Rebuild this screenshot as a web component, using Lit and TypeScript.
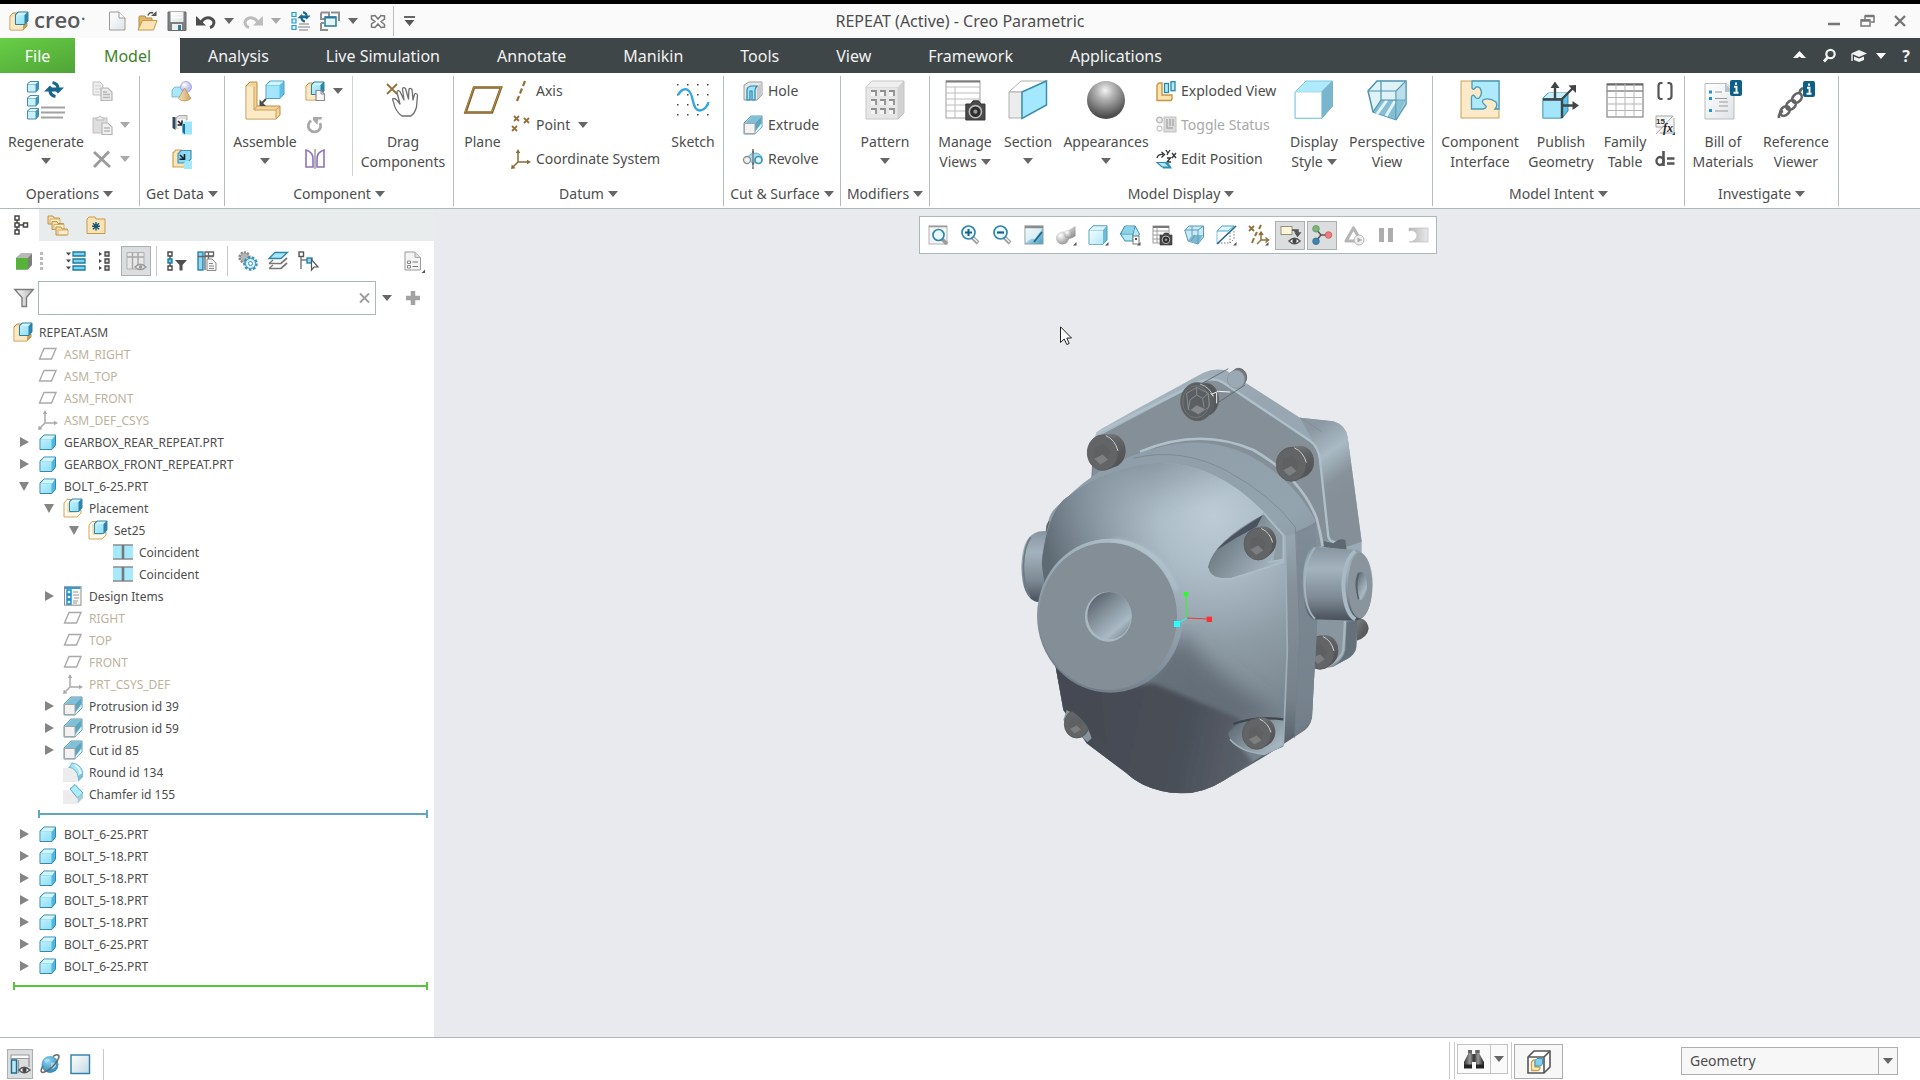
import { LitElement, html, svg, css, nothing } from "lit";
import { customElement } from "lit/decorators.js";
import { classMap } from "lit/directives/class-map.js";

/* ---------- icon fragments ---------- */

const partCube = svg`<path d="M2 7 L6 3 H17.500 V13 L14 17.500 H2 Z" fill="#4fb6de" stroke="#3787ab" stroke-linejoin="round"/>
  <path d="M2.500 7.500 L6 3.500 H17 L14 7.500 Z" fill="#d3f5fd"/>
  <path d="M2.500 7.500 H13.500 V17 H2.500 Z" fill="url(#gCyan)"/>`;

const asmCube = svg`<path d="M1 5 L4 2 H8 V12 H18 V15 L14 19 H1 Z" fill="#f8dfae" stroke="#c08f41" stroke-linejoin="round"/>
  <path d="M1.500 5.500 H5 V14 H14 V18.500 H1.500 Z" fill="#fce9c4"/>
  <path d="M14 14.500 L18 12.500 V15 L14 19 Z" fill="#d09d4b"/>
  <path d="M6.500 3.500 L9 1 H19 V10 L16 13.500 H6.500 Z" fill="#2d83aa" stroke="#33809f"/>
  <path d="M7 4 L9.500 1.500 H18 L15.500 4 Z" fill="#d3f3fd"/><path d="M7 4 H15.500 V13 H7 Z" fill="url(#gCyan)"/>`;

const asmOutline = svg`<path d="M1 5 L4 1.500 H8 V12 H18 V15 L14 19 H1 Z" fill="#fffaf0" stroke="#d3a452"/>
  <path d="M5 5 V14 H14" fill="none" stroke="#e6c686"/>
  <path d="M6.500 3.500 L9 1 H19 V10 L16 13.500 H6.500 Z" fill="#2d83aa" stroke="#3b87a6"/>
  <path d="M7 4 L9.500 1.500 H18 L15.500 4 Z" fill="#d3f3fd"/><path d="M7 4 H15.500 V13 H7 Z" fill="url(#gCyan)"/>`;

const camera = svg`<path d="M8 10 H11 L12.500 8 H16 L17.500 10 H20 V20 H8 Z" fill="#4a4a4a" stroke="#333" stroke-width=".6"/>
  <circle cx="14" cy="14.800" r="3.800" fill="#2c2c2c" stroke="#bbb" stroke-width="1"/><circle cx="14" cy="14.800" r="1.300" fill="#999"/>`;

const planeOutline = (c: string) => svg`<path d="M6 4.500 H18 L13.500 15 H1.500 Z" fill="none" stroke=${c} stroke-width="1.400"/>`;
const csys = (c: string) => svg`<path d="M7 3 V13 H18 M7 13 L1.500 18.500" fill="none" stroke=${c} stroke-width="1.500"/>
  <path d="M7 0 L9.200 4 H4.800 Z M20 13 L16 10.800 V15.200 Z M0 20 L.8 15.500 L4.500 19.200 Z" fill=${c}/>`;
const feature = svg`<path d="M1 8 L8 1 H19 V12 L12 19 H1 Z" fill="#d5edf5" stroke="#4e8ba3" stroke-width=".9"/>
  <path d="M2 8 L8.500 1.500 H18.500 L12 8 Z" fill="#7fc0d8"/><path d="M12 8 L18.500 1.500 V8 L12 17 Z" fill="#5ba5c1"/>
  <path d="M12 17 L18.500 9 V12 L12.500 18.500 Z" fill="#d9f5fd"/>
  <path d="M1.500 8.500 H12 V18.500 H1.500 Z" fill="#f2f2f2" stroke="#a5a5a5"/>`;
const twoArrows = svg`<path d="M0 11 L6 5 L12 11 Z M8 7 H20 L14 13 Z" fill="#17668b"/><path d="M6 10.500 Q6.500 15 11.500 16 M14 7.500 Q13.500 3 8.500 2" fill="none" stroke="#17668b" stroke-width="3.200"/>`;
const lens = svg`<path d="M12 12 L18 18" stroke="#9b9b9b" stroke-width="4"/><path d="M13 12.500 L17.500 17" stroke="#eee" stroke-width="1.500"/>
  <circle cx="8.500" cy="7.500" r="6.500" fill="#e9f8fe" stroke="#2f86ad" stroke-width="1.700"/>`;
const info = svg`<rect x="27" y="0" width="12" height="16" rx="2" fill="#0e5f86"/><path d="M33 2.500 v2.200 M31 6.700 h2.500 v5.500 M30.500 12.800 h5" fill="none" stroke="#fff" stroke-width="1.900"/>`;
const corner = svg`<path d="M20.500 17 V20.500 H17 Z" fill="#555"/>`;
const miniCube = (x: number, y: number) => svg`<g transform="translate(${x} ${y})"><path d="M.5 3 L3 .5 H11.500 V8 L9 11 H.5 Z" fill="#3d94b8" stroke="#3f8fb0"/><path d="M1 3 L3.500 1 H11 L8.500 3 Z" fill="#eefbff"/><path d="M1 3.500 H8.500 V10.500 H1 Z" fill="#c9f0fc"/></g>`;
const xMark = (x: number, y: number, s: number) => svg`<path d="M${x} ${y} l${s} ${s} m0 ${-s} l${-s} ${s}" stroke="#93713a" stroke-width="1.800" fill="none"/>`;

const icons: Record<string, unknown> = {
  asm: asmCube,
  asmOutline,
  part: partCube,
  planeDim: planeOutline("#a9a9a9"),
  csysDim: csys("#a9a9a9"),
  feature,
  coincident: svg`<rect y="3" width="20" height="14" fill="#a6e8fc"/><path d="M0 3 H20 M0 17 H20" stroke="#8c8c8c" stroke-width="1.400"/><path d="M10 3 V17" stroke="#777" stroke-width="2.600"/>`,
  design: svg`<rect x="1.500" y=".7" width="16.500" height="18.500" fill="#f7f7f7" stroke="#8d8d8d"/><path d="M2 2 H17.500" stroke="#2d9bd6" stroke-width="2"/>
    <path d="M4 4 h4 v4 h-4z M4 9 h4 v4 h-4z M4 14 h4 v4 h-4z" fill="#e5f6fd" stroke="#1789c4" stroke-width="1.400"/><path d="M10 6 H15 M10 9 H16 M11 12 H16 M10 15 H15 M10 17 H14" stroke="#999" stroke-width="1"/>`,
  round: svg`<path d="M0 6 H8 Q14 8 14 14 V20 H0 Z" fill="#ececec"/><path d="M6 1 H10" stroke="#ddd"/><path d="M6 6 Q8 3 9 1 Q18 2 20 11 L15 15 Q14 7 6 5 Z" fill="#a9e4f8" stroke="#57a9c7" stroke-width=".8"/><path d="M12 3 Q17 6 17.500 12" fill="none" stroke="#e4f8fe" stroke-width="2"/><path d="M14.500 15 L20 11 V15 L15 20 Z" fill="#7fbcd2"/>`,
  chamfer: svg`<path d="M0 6 H6 L14 14 V20 H0 Z" fill="#ececec"/><path d="M7 5 L12 .5 L20 9 L14.500 14 Z" fill="#a9ecfd" stroke="#4b95b0" stroke-width=".9"/><path d="M14.500 14 L20 9 V14 L14.500 19.500 Z" fill="#a8ccd8"/>`,

  newDoc: svg`<path d="M2.500 1 H12 L18 7 V19 H2.500 Z" fill="url(#gPaper)" stroke="#9a9a9a"/><path d="M12 1 V7 H18" fill="#fff" stroke="#9a9a9a"/>`,
  open: svg`<path d="M2 18 V6 Q2 5 3 5 H8 L9 7 H15 V10 H7 Z" fill="#e2b866" stroke="#b98b3a"/><path d="M1 19 L5.500 9.500 H20 L16.500 19 Z" fill="#fbe3b3" stroke="#c39a4b"/><path d="M11 4.500 Q12.500 .5 16 2" fill="none" stroke="#555" stroke-width="1.600"/><path d="M14 5 H19.500 V0 Z" fill="#555"/>`,
  save: svg`<path d="M1 1 H19 V19.500 H1 Z" fill="#7d7f81" stroke="#6b6b6b"/><rect x="3.500" y="1" width="13" height="10" fill="url(#gPaper)"/><rect x="5" y="13" width="10" height="6" fill="#e8f0f4"/><rect x="11" y="14" width="3" height="5" fill="#3a7792"/><path d="M5 3.500 H15 M5 6.500 H15" stroke="#fff"/>`,
  undo: svg`<path d="M4 13 Q8 5.500 14 7 Q20 9.500 17 14.500 Q16 16 14 16.500" fill="none" stroke="#4c4c4c" stroke-width="3"/><path d="M0 5 V14.500 H10 Z" fill="#4c4c4c"/>`,
  redo: svg`<path d="M16 13 Q12 5.500 6 7 Q0 9.500 3 14.500 Q4 16 6 16.500" fill="none" stroke="#bcbcbc" stroke-width="3"/><path d="M20 5 V14.500 H10 Z" fill="#bcbcbc"/>`,
  regenSmall: svg`<path d="M1 1.500 h4 v4 h-4z M1 8 h4 v4 h-4z M1 14.500 h4 v4 h-4z" fill="#d7f3fd" stroke="#2c9bcc" stroke-width="1.200"/><path d="M8 13 H18 M7 16 H19 M8 19 H17" stroke="#a7a7a7" stroke-width="1.500"/><g transform="translate(6.500 0) scale(.65)">${twoArrows}</g>`,
  windows: svg`<path d="M1 1.500 H9 V8 M11 1.500 H19 V10 M1 1.500 V8 H5 M1 12 V19 H8 M1 12 H4" fill="none" stroke="#8f8f8f" stroke-width="2"/><rect x="5" y="6" width="11" height="9" fill="#e4f6fc" stroke="#27799d" stroke-width="1.500"/><path d="M5 6.500 H16" stroke="#27799d" stroke-width="2"/>`,
  closeWin: svg`<path d="M3.500 5 L7 4.500 L10 8 L13 4.500 L16.500 5 V8 L13 10.500 L16.500 13.500 V16 L13 16.500 L10 13 L7 16.500 L3.500 16 V13 L7 10.500 L3.500 8 Z" fill="#fff" stroke="#777" stroke-width="1.500"/>`,
  custom: svg`<path d="M5 6 H16" stroke="#555" stroke-width="1.800"/><path d="M5.500 9 H15.500 L10.500 15 Z" fill="#555"/>`,

  regenerate: svg`${miniCube(1, 1)}${miniCube(1, 15)}${miniCube(1, 28)}<path d="M15 27.500 H39 M15 32.500 H39 M15 37.500 H37" stroke="#a2a2a2" stroke-width="2"/><g transform="translate(18 .5)">${twoArrows}</g>`,
  copyDim: svg`<path d="M1 1 H8 L11 4 V14 H1 Z" fill="#efefef" stroke="#c0c0c0"/><path d="M3 5 H9 M3 8 H9 M3 11 H7" stroke="#cfcfcf"/><path d="M9 7 H16 L20 11 V19.500 H9 Z" fill="#e9e9e9" stroke="#b5b5b5" stroke-width="1.200"/><path d="M11 11 H15 M11 13.500 H18 M11 16.500 H18" stroke="#b9b9b9" stroke-width="1.300"/>`,
  pasteDim: svg`<rect x="1" y="3" width="14" height="15" fill="#dedede" stroke="#c0c0c0"/><path d="M4 5 V3 H6 Q8 -1 10 3 H12 V5 Z" fill="#eee" stroke="#bbb"/><path d="M10 8 H16 L20 12 V19.500 H10 Z" fill="#f0f0f0" stroke="#b5b5b5" stroke-width="1.200"/><path d="M12 13 H18 M12 16 H18" stroke="#b9b9b9" stroke-width="1.400"/>`,
  deleteDim: svg`<path d="M2 3 L18 18 M17 2.500 L2 18" stroke="#9b9b9b" stroke-width="2.800"/>`,
  shapes: svg`<path d="M0 9 L3 6 H12 V14 L9 16 H0 Z" fill="#a9e7fb" stroke="#6aaecb" stroke-width=".8"/><circle cx="14" cy="6" r="5.500" fill="url(#gViolet)" stroke="#9a9cd6" stroke-width=".8"/><path d="M12.500 7 L19 17.500 Q16 20 12.500 20 Q9 20 6.500 17.500 Z" fill="url(#gTan)" stroke="#b7955a" stroke-width=".8"/>`,
  copyGeom: svg`<path d="M4 3 L7 .5 H15 V5 H7 V13 H4 Z" fill="#ddd" stroke="#999" stroke-width=".8"/><path d="M.5 2 H3.500 V15 L.5 13 Z" fill="#2d4a5c"/><rect x="5" y="4" width="9" height="9" fill="#f2f2f2"/><path d="M6 6 L9.500 9.500 M10 5.500 V10 H5.500" stroke="#222" stroke-width="1.600" fill="none"/><path d="M10 9 L13 6.500 H20 V19.500 H10 Z" fill="#9be4fb"/><path d="M10.500 9 H13 V19.500 L10.500 17 Z" fill="#176e92"/>`,
  shrink: svg`<path d="M1 4 L4 1 H9 V13 H13 V18 H1 Z" fill="#fbe5ba" stroke="#cb9f4f" stroke-width="1.200"/><path d="M6 5 L9 1.500 H19 V10 L15 14 H6 Z" fill="#8cd9f3" stroke="#4492b2" stroke-width="1.200"/><path d="M8 6 L11.500 9.500 M12.500 5 V10.300 H7.500" stroke="#123" stroke-width="1.600" fill="none"/><path d="M12 14 L14 12 H20 V20 H12 Z" fill="#a3e9fc"/>`,
  assemble: svg`<path d="M1 6 L5 2 H12 V26 H35 V35 L31 39 H1 Z" fill="#f4d49a" stroke="#b98d47" stroke-linejoin="round"/><path d="M1.500 6.500 H9 V30 H31 V38.500 H1.500 Z" fill="#fce9c6"/><path d="M9 6.500 V30 H31 V38 M9 30 L12 26 M31 30 L35 26.500" fill="none" stroke="#cba059"/>
    <path d="M21 5 L25 1 H39 V14 L35 18.500 H21 Z" fill="#5ac0e6" stroke="#4d9fc0" stroke-linejoin="round"/><path d="M21.500 5 L25.500 1.500 H38.500 L34.500 5 Z" fill="#d3f4fd"/><rect x="21.500" y="5.500" width="13" height="12.500" fill="#a3e6fb"/><path d="M21 19 L16 24" fill="none" stroke="#4c4c4c" stroke-width="2"/><path d="M14.500 19.500 V26 H21 Z" fill="#4c4c4c"/>`,
  createComp: svg`${asmCube}<path d="M11 9.500 H16 L19.500 13 V19.500 H11 Z" fill="#f6f6f6" stroke="#8b8b8b" stroke-width="1.200"/><path d="M16 9.500 V13 H19.500" fill="none" stroke="#8b8b8b"/>`,
  repeatDim: svg`<path d="M6 5.500 Q1.500 10 4.500 14.500 Q8 18.500 13 16 Q17 12.500 15 8" fill="none" stroke="#a9a9a9" stroke-width="2.700"/><path d="M8 2 H17 L16.500 4.500 H13 L12.500 10 L8 5 Z" fill="#a9a9a9"/>`,
  mirror: svg`<path d="M1 1 Q8 3 8 10 V18 H1 Z M19 1 Q12 3 12 10 V18 H19 Z" fill="#fff" stroke="#9272b8" stroke-width="1.600"/><path d="M10 0 V20" stroke="#888" stroke-width="1.200"/>`,
  drag: svg`${xMark(4, 4, 10)}<path d="M10.500 22 Q8.500 18.500 11 18.500 Q13 18.500 17 24 L14 12.500 Q14 9.500 17 11.500 L21 20 L19.500 9 Q20 6.500 22.500 8.500 L25.500 19 L26 9 Q27.500 7.500 29 9.500 L30 20 L31.500 14 Q33.500 13 34.500 15 L33.500 27 Q32 33 28 36 H19 Q12 31 10.500 22 Z" fill="#fff" stroke="#6e6e6e" stroke-width="1.300" stroke-linejoin="round"/>`,

  plane: svg`<path d="M11 7.500 H38 L29 32.500 H2.500 Z" fill="none" stroke="#7d5f2b" stroke-width="2.600"/><path d="M11 7 H38 L29 32 H2 Z" fill="none" stroke="#b58f4d" stroke-width="1"/>`,
  axis: svg`<path d="M14 0 L12 5 M11 7.500 L9 12.500 M8 15 L6 20" stroke="#93713a" stroke-width="2.200"/>`,
  point: svg`${xMark(3, 1, 5)}${xMark(13, 3, 5)}${xMark(1, 11, 5)}`,
  csys: csys("#8a6a33"),
  sketch: svg`<g fill="#444">${[5, 15, 25, 35].flatMap((y) => [5, 15, 25, 35].map((x) => svg`<rect x=${x - 1} y=${y - 1} width="1.500" height="1.500"/>`))}</g><path d="M5 15 Q9 8 14 9.500 Q18 11 20 21 Q22 31 27 30.500 Q33 30 35.500 22" fill="none" stroke="#35a5de" stroke-width="2.400"/>`,

  hole: svg`<path d="M1 4 L6 1 H19 V14 L14 19 H1 Z" fill="#e6e6e6" stroke="#9c9c9c"/><path d="M14 6 L19 1.500 V14 L14 18.500 Z" fill="#c9c9c9"/><path d="M4 19 V9 Q4 6 8 5 H14 Q12 7 12 10 V19 H9 V10 H7 V19 Z" fill="#a3e4fa" stroke="#2686ae" stroke-width="1.200"/>`,
  extrude: feature,
  revolve: svg`<path d="M10 0 V20" stroke="#444" stroke-width="1.200" stroke-dasharray="4 2"/><ellipse cx="12" cy="9" rx="7" ry="5" fill="#a3dbef" stroke="#5ea4c0" stroke-width=".8"/><circle cx="4" cy="11" r="3.500" fill="#f3f3f3" stroke="#909090" stroke-width="1.300"/><circle cx="15.500" cy="11" r="3.500" fill="#dff5fd" stroke="#3b93b8" stroke-width="1.700"/><path d="M10 2 V18" stroke="#555"/>`,
  pattern: svg`<path d="M1 7 L7 1 H39 V33 L33 39 H1 Z" fill="#d2d2d2" stroke="#c3c3c3"/><path d="M1.500 7 L7 1.500 H38 L33 7 Z" fill="#efefef"/><rect x="1.500" y="7.500" width="31" height="31" fill="#e6e6e6"/>
    ${[11, 20, 29].flatMap((y) => [6, 15, 24].map((x) => svg`<rect x=${x} y=${y} width="5" height="5" fill="#f4f4f4"/><path d="M${x} ${y} h5 v5" fill="none" stroke="#8f8f8f" stroke-width="1.800"/>`))}`,
  manageViews: svg`<rect x="1" y="1" width="34" height="37" fill="#fff" stroke="#9d9d9d"/><path d="M1 1.500 H35" stroke="#7b7b7b" stroke-width="2"/><path d="M1 7 H35 M1 13 H35 M1 19 H35 M1 25 H35 M1 31 H35 M10 7 V38" stroke="#bcbcbc"/><g transform="translate(8 8) scale(1.600)">${camera}</g>`,
  section: svg`<path d="M1 12 L13 1 H38 L14 12 Z" fill="#fff" stroke="#b0b0b0"/><path d="M1 12 H14 V38 H1 Z" fill="#ececec" stroke="#b0b0b0"/><path d="M14 12 L38.500 1 V25 L14 38.500 Z" fill="#a3e8fc" stroke="#3f8dab" stroke-width="1.500"/>`,
  appearances: svg`<circle cx="20" cy="20" r="19" fill="url(#gBall)"/>`,
  exploded: svg`<path d="M1 4 L3 2 H6 V14 H16 V18 L15 19.500 H1 Z" fill="#fce3b2" stroke="#c79740" stroke-width="1.400"/><rect x="8.500" y="2.500" width="4" height="9" fill="#b5ecfb" stroke="#2686ae" stroke-width="1.300"/><rect x="15" y=".7" width="4" height="9" fill="#b5ecfb" stroke="#2686ae" stroke-width="1.300"/>`,
  toggleDim: svg`<circle cx="3.500" cy="5" r="2.800" fill="#eee" stroke="#b7b7b7" stroke-width="1.300"/><circle cx="3.500" cy="13.500" r="2.500" fill="#fff" stroke="#c9c9c9" stroke-width="1.300"/><rect x="8" y="2" width="12" height="15" fill="#dadada" stroke="#c2c2c2"/><path d="M11 4 V13 H17 M14 4 V11 M17 4 V11" fill="none" stroke="#aaa" stroke-width="1.400"/>`,
  editPos: svg`<path d="M1 9 Q2 5 7 5.500 M5.500 3 L8.500 5.500 L5.500 8.500 M10 1 L12 4 L14 1 M12 4 L11 6 M16 4 L20 9 M20 4 L16 9 M11 9 H14.500 L11 13 H15" stroke="#333" fill="none" stroke-width="1.300"/><path d="M5 13 H12 L16 19.500 H7 Z" fill="#2f93bc"/><path d="M1 13.500 H9 L14 18 H6 Z" fill="#aee9fb" stroke="#2d89b0" stroke-width="1.100"/>`,
  display: svg`<path d="M1 12 L12 1 H38.500 V26 L27.500 38.500 H1 Z" fill="#aeeafc" stroke="#7cc9e2"/><path d="M27.500 12 L38.500 1 V26 L27.500 38.500 Z" fill="#79b6cd" stroke="#79b6cd"/><rect x="1.500" y="12" width="26" height="26" fill="#fff" stroke="#9ad8ec" stroke-width=".8"/>`,
  perspective: svg`<path d="M1 11 L10 1 H39 V24 L29 39.500 L6 32 Z" fill="#dff2f8" stroke="#4b93ae" stroke-width="1.500"/><path d="M6 32 L14 20 H39 L29 39.500 Z" fill="#86bdd2"/><path d="M10 34 L20 20 M19 36 L28 21" stroke="#dff5fb" stroke-width="3"/><path d="M1 11 H29 V39.500 M29 11 L39 1 M14 1 V20 H39 M14 20 L6 32" fill="none" stroke="#4b93ae" stroke-width="1.200"/><path d="M29 11 L39 1 V24 L29 39.500 Z" fill="#8fc7da" fill-opacity=".45"/>`,
  compInterface: svg`<rect x="1" y="1" width="38" height="37" fill="#fbe9c8" stroke="#c9a15a"/><path d="M12 1 H39 V29 H35 Q38 26 36 22 Q29 17 23 20 Q21 22 26 26 Q27 28 23 29 H11.500 V17 Q13 13 16 18 Q20 20 21.500 13 Q21 6 16 7 Q13 11 12 8 Z" fill="#aeeafc" stroke="#4a9ab8" stroke-width="1.300"/>`,
  publish: svg`<path d="M2 18 L7 13 H27 V31 L21 38 H2 Z" fill="#2a7c9d" stroke="#3b90b2"/><path d="M2.500 18 L7.500 13 H26 L21 18 Z" fill="#c6f1fc"/><path d="M21.500 20 L26.500 14 V30.500 L21.500 37 Z" fill="#5cc3ea"/><rect x="2" y="19" width="19" height="19" fill="#a3e6fb" stroke="#57a9c6"/><path d="M2 19.500 H21 V38 M14 19 V5 M21 19 L32 8 M21 25.500 H34" fill="none" stroke="#404648" stroke-width="2.400"/><path d="M14 1.500 L18.500 8 H9.500 Z M35 5 V13 L27.500 5.500 Z M38 25.500 L31.500 30 V21 Z" fill="#404648"/>`,
  family: svg`<rect x="2" y="4" width="36" height="33" fill="#fff" stroke="#8e8e8e" stroke-width="1.300"/><path d="M2 4.500 H38" stroke="#666" stroke-width="2.200"/><path d="M2 11 H38" stroke="#8a8a8a" stroke-width="1.600"/><path d="M2 17.500 H38 M2 24 H38 M2 30.500 H38 M11 4 V37 M20 4 V37 M29 4 V37" stroke="#b5b5b5"/>`,
  braces: svg`<path d="M7.500 2 H6 Q3.500 2 3.500 5 V15 Q3.500 18 6 18 H7.500 M12.500 2 H14 Q16.500 2 16.500 5 V15 Q16.500 18 14 18 H12.500" fill="none" stroke="#555" stroke-width="2.200"/>`,
  fx: svg`<path d="M1 1 H19 V19 H1 Z" fill="#f5f5f5"/><path d="M1 1 H18 L1 19 M1 1 V12 H8 M19 3 V18 H5" fill="none" stroke="#a5a5a5"/><text x="1" y="9" font-family="Liberation Sans" font-size="8" font-weight="700" fill="#333">15</text><text x="8" y="17" font-family="Liberation Serif" font-style="italic" font-size="12" font-weight="700" fill="#222">fx</text><path d="M17 20 L20 17 V20 Z" fill="#0e5f86"/>`,
  dEq: svg`<path d="M8.500 2 V17" stroke="#555" stroke-width="2.600"/><ellipse cx="5" cy="12" rx="3.500" ry="4" fill="none" stroke="#555" stroke-width="2.400"/><path d="M12 9.500 H19.500 M12 14.500 H19.500" stroke="#555" stroke-width="2.600"/>`,
  bom: svg`<path d="M2 3.500 H24 L31 11 V39 H2 Z" fill="url(#gPaper)" stroke="#bbb"/><path d="M22 3.500 L31 12 H22 Z" fill="#b5c6cf"/><path d="M6 10.500 h3 v3 h-3z M6 17 h3 v3 h-3z M6 29 h3 v3 h-3z" fill="#1c94cf"/><path d="M12 12 H19 M12 18.500 H24 M16 22 H25 M16 26 H25 M12 31 H25" stroke="#999" stroke-width="1.200"/>${info}`,
  refViewer: svg`<g fill="none" stroke="#636363" stroke-width="2.600"><path d="M3 38 Q2 33 7 31"/><ellipse cx="9" cy="31" rx="5.500" ry="4" transform="rotate(-45 9 31)"/><ellipse cx="15" cy="25" rx="5.500" ry="4" transform="rotate(-45 15 25)"/><ellipse cx="21" cy="18" rx="5.500" ry="4" transform="rotate(-48 21 18)"/><path d="M24 14 Q23 10 27 8"/></g><g transform="translate(0 1)">${info}</g>`,

  refit: svg`<rect x="1" y="1" width="18" height="18" fill="#f4f4f4" stroke="#b2b2b2"/><path d="M1 1.500 H19" stroke="#999" stroke-width="1.500"/><path d="M14 14 L19 19" stroke="#9b9b9b" stroke-width="3.500"/><circle cx="10.500" cy="10" r="5.500" fill="#e9f8fe" stroke="#2f86ad" stroke-width="1.700"/>`,
  zoomIn: svg`${lens}<path d="M5 7.500 H12 M8.500 4 V11" stroke="#175f83" stroke-width="2"/>`,
  zoomOut: svg`${lens}<path d="M5 7.500 H12" stroke="#175f83" stroke-width="2.200"/>`,
  repaint: svg`<rect x="1" y="1" width="18" height="18" fill="url(#gRepaint)" stroke="#8e9aa0"/><path d="M1 2 H19" stroke="#8b8b8b" stroke-width="2.400"/><path d="M1.500 3.500 H18.500 L11 14 Q6 13 1.500 18.500 Z" fill="#fff" fill-opacity=".65"/><path d="M10 17 L18 7" stroke="#1d6384" stroke-width="1.700"/>`,
  shading: svg`<path d="M9 7 L19.500 1 V11 Q15 15 10 14 Z" fill="url(#gMetal)"/><circle cx="6.500" cy="13" r="6.500" fill="url(#gBall2)"/><circle cx="12" cy="9" r="4" fill="url(#gBall2)"/>${corner}`,
  saved: svg`<path d="M1 5 L5 .8 H19 V15 L15 19.200 H1 Z" fill="#6dbbd6" stroke="#4f9fbc"/><path d="M1.500 5 L5.500 1.200 H18.500 L15 5 Z" fill="#d8f4fc"/><rect x="1.500" y="5.500" width="13.500" height="13.500" fill="url(#gIce)"/>${corner}`,
  viewMgr: svg`<path d="M5 1 H15 L19.500 9 L15 16 H5 L.5 9 Z" fill="#b3e8f8" stroke="#3f8dab"/><path d="M.5 9 H13 L15 1 M13 9 V16 M5 1 L.5 9" fill="none" stroke="#3f8dab"/><path d="M5 1.500 H14.500 L12.500 8.500 H1.500 Z" fill="#8cd2e8"/><rect x="13" y="11" width="6" height="8" fill="#fff" stroke="#777"/><rect x="15" y="13" width="2" height="2" fill="#555"/>${corner}`,
  captures: svg`<rect x="1" y="1" width="16" height="17" fill="#fff" stroke="#9a9a9a"/><path d="M1 2 H17" stroke="#777" stroke-width="2"/><path d="M1 6 H17 M1 10 H9 M1 14 H9 M5 2 V18" stroke="#9c9c9c"/>${camera}`,
  persp: svg`<path d="M.8 5 L5 1 H19.500 V12 L14 19 L4 16 Z" fill="#c9e9f4" stroke="#5199b4"/><path d="M4 16 L8 10 H19 L14 19 Z" fill="#7fb9cf"/><path d="M.8 5 H14 V19 M14 5 L19.500 1 M8 1 V10 M7 16 L11 10" fill="none" stroke="#5a9eb8"/>`,
  sectionOff: svg`<path d="M1 6 L6 1 H18 L12 6 Z" fill="#dff6fd" stroke="#4ba7c9"/><path d="M2 18 H14 L18 14 V6 M14 18 V8" fill="none" stroke="#777" stroke-dasharray="1.500 1.500"/><path d="M1 6 V18" stroke="#7dc1da"/><path d="M1 19 L20 1" stroke="#23678a" stroke-width="1.700"/>${corner}`,
  datumDisplay: svg`${xMark(1, 1, 5)}<path d="M13 0 L11 4 M9 7 L7 11 M6 13 L4 18" stroke="#93713a" stroke-width="2"/><path d="M13 9 V15 H20 M13 15 L9 19 M11 10 L13 7 L15 10 M17.500 12.500 L20.500 15 L17.500 17.500" fill="none" stroke="#93713a" stroke-width="1.500"/>${corner}`,
  annotation: svg`<rect x="1" y="1.500" width="11" height="8" fill="#fdf6da" stroke="#9a8f7a"/><path d="M12 5 H18 V9 M15.500 8 H20 L17.500 11 Z" fill="#555" stroke="#555" stroke-width="1.400"/><path d="M9 16 Q14.500 10.500 20 16 Q14.500 21.500 9 16 Z" fill="#fff" stroke="#555" stroke-width="1.500"/><circle cx="14.500" cy="16" r="2.200" fill="#444"/>`,
  spin: svg`<path d="M4 4 L9 10 L4 16 M9 10 H16" stroke="#555" stroke-width="1.500" fill="none"/><circle cx="4" cy="3.800" r="3.300" fill="#7cb57a" stroke="#5d945b" stroke-width=".8"/><circle cx="16.500" cy="10" r="3.300" fill="#ef7b7b" stroke="#c75c5c" stroke-width=".8"/><circle cx="4" cy="16.300" r="3.300" fill="#3f86ae" stroke="#2a6c92" stroke-width=".8"/>`,
  simDim: svg`<path d="M9.500 3 L17 16 H2 Z" fill="none" stroke="#b5b5b5" stroke-width="3.200" stroke-linejoin="round"/><circle cx="15" cy="15" r="5" fill="#efefef" stroke="#b5b5b5"/><path d="M13.500 12.500 L18 15 L13.500 17.500 Z" fill="#aaa"/>`,
  pauseDim: svg`<path d="M3 3 H8 V17 H3 Z M12 3 H17 V17 H12 Z" fill="#adadad"/>`,
  resultDim: svg`<path d="M1 3 H20 V17 H1 Q9 16 9 10 Q7 4 1 6 Z" fill="url(#gGrayH)" stroke="#c4c4c4" stroke-width=".8"/>`,

  tree: svg`<path d="M7 5 V15 M9 10 H14" stroke="#444" stroke-width="1.400"/><path d="M5 1 h4 v4 h-4z M5 8 h4 v4 h-4z M5 15 h4 v4 h-4z M13.500 8 h4 v4 h-4z" fill="#fff" stroke="#444" stroke-width="1.500"/>`,
  folders: svg`${[0, 1, 2].map((i) => svg`<g transform="translate(${i * 4} ${i * 5.5})"><path d="M0 1 H5 L6 3 H11.500 V9 H0 Z" fill="#f9dfa9" stroke="#b58b45" stroke-width=".9"/><path d="M2 4 H12 V8.800 H2 Z" fill="#fdeecb" stroke="#c9a15a" stroke-width=".8"/></g>`)}`,
  favorites: svg`<path d="M1 4 L3 2 H9 L10 4 H19 V18.500 H1 Z" fill="#fbe3b3" stroke="#c39a4b"/><path d="M10 7 V15.500 M6 11.300 H14 M7 8.300 L13 14.300 M13 8.300 L7 14.300" stroke="#15587a" stroke-width="1.400"/>`,
  greenCube: svg`<path d="M2 7 L7 2.500 H18 V14 L14 18.500 H2 Z" fill="#7d7d7d"/><path d="M2 7 L7 2.500 H18 L14 7 Z" fill="#b8b8b8"/><rect x="2" y="7" width="12" height="11.500" fill="#57b238"/>`,
  expandAll: svg`<path d="M0 1.500 H5 L2.500 4.500 Z M0 8.500 H5 L2.500 11.500 Z M0 15.500 H5 L2.500 18.500 Z" fill="#444"/><path d="M7 1 H19 V5 H7 Z M7 8 H19 V12 H7 Z M7 15 H19 V19 H7 Z" fill="#7fd3f0" stroke="#1d7ba3" stroke-width="1.300"/>`,
  collapseAll: svg`<path d="M3 1 L6 3 L3 5 Z M3 8 L6 10 L3 12 Z M3 15 L6 17 L3 19 Z" fill="#444"/><path d="M9 1 H13 V5 H9 Z M9 8 H13 V12 H9 Z M9 15 H13 V19 H9 Z" fill="#ccc" stroke="#444" stroke-width="1.300"/>`,
  columns: svg`<path d="M1 1.500 H18 V18 H1 Z" fill="#e8e8e8" stroke="#b0b0b0"/><path d="M1 6 H18 M6.500 1.500 V18 M12 1.500 V18" stroke="#a7a7a7" stroke-width="1.500"/><path d="M9 16 Q14 10.500 20 16 Q14 21 9 16 Z" fill="#eee" stroke="#999" stroke-width="1.400"/><circle cx="14.500" cy="16" r="1.800" fill="#999"/>`,
  treeFilter: svg`<path d="M3 4 V16" stroke="#444" stroke-width="1.300"/><path d="M1 1 h4 v4 h-4z M1 15 h4 v4 h-4z" fill="#fff" stroke="#444" stroke-width="1.400"/><rect x="1" y="8" width="4" height="4" fill="#5fc3ea" stroke="#1d7ba3" stroke-width="1.400"/><path d="M8 9 H20 L15.500 14 V19.500 H12.500 V14 Z" fill="#4f4f4f"/>`,
  treeColumns: svg`<rect x="1" y="1" width="5" height="18" fill="#8cd9f3" stroke="#1d7ba3" stroke-width="1.300"/><path d="M8 1 H16.500 V5 H8 Z" fill="#fff" stroke="#666" stroke-width="1.400"/><path d="M1 5.500 H16.500 M11.500 1 V8 M8 5 V19" stroke="#666" stroke-width="1.300"/><path d="M10 8 H15 L19 12 V19.500 H10 Z" fill="#f5f5f5" stroke="#888"/><path d="M12 12.500 H16 M12 15 H17 M12 17.500 H17" stroke="#888"/>`,
  gears: svg`<circle cx="6.500" cy="6.500" r="5" fill="#b5b5b5" stroke="#8c8c8c" stroke-width="2.500" stroke-dasharray="2 1.200"/><circle cx="12.500" cy="12.500" r="6" fill="#d9f3fc" stroke="#3b93b8" stroke-width="2.600" stroke-dasharray="2.600 1.500"/><circle cx="12.500" cy="12.500" r="5" fill="#d9f3fc" stroke="#3b93b8"/><circle cx="12.500" cy="12.500" r="2" fill="#fff" stroke="#3b93b8"/>`,
  layers: svg`<path d="M1 17.500 H13 L19 12 M1 12.500 H13 L19 7" fill="none" stroke="#777" stroke-width="1.700"/><path d="M1 17.500 L5 14 M1 12.500 L5 9" stroke="#777" stroke-width="1.200"/><path d="M1 7.500 L7 1.500 H19.500 L13 7.500 Z" fill="#a9e7fa" stroke="#2f86ad" stroke-width="1.300"/>`,
  treeSelect: svg`<path d="M3 6 V18 M3 9 H10" stroke="#777" stroke-width="1.400"/><rect x="1" y="1" width="4.500" height="4.500" fill="#fff" stroke="#555" stroke-width="1.400"/><rect x="9" y="7" width="5" height="5" fill="#8cd9f3" stroke="#1d7ba3" stroke-width="1.300"/><path d="M13.500 8.500 V19 L16 16 H20 Z" fill="#fff" stroke="#555" stroke-width="1.200"/>`,
  report: svg`<path d="M2 1 H12 L17.500 6.500 V19 H2 Z" fill="#f4f4f4" stroke="#999"/><path d="M12 1 V6.500 H17.500" fill="#ddd" stroke="#aaa"/><path d="M4.500 10 h3 v2.500 h-3z M4.500 14.500 h3 v2.500 h-3z" fill="#fff" stroke="#888"/><path d="M9.500 11 H15 M9.500 15.500 H15" stroke="#777" stroke-width="1.200"/><path d="M22 18.500 V22 H18.500 Z" fill="#555"/>`,
  funnel: svg`<path d="M.8 1.500 H19.200 L12.500 9.500 V18.500 H8 V9.500 Z" fill="url(#gFunnel)" stroke="#7c7c7c" stroke-width="1.400"/>`,
  clear: svg`<path d="M5 5.500 L14 14.500 M14 5.500 L5 14.500" stroke="#9d9d9d" stroke-width="1.800"/>`,
  plus: svg`<path d="M10 3 V17 M3 10 H17" stroke="#a2a2a2" stroke-width="4.500"/>`,

  navToggle: svg`<rect x="1" y="1" width="18" height="3.500" fill="#fff" stroke="#999"/><rect x="1.500" y="6" width="5" height="13" fill="#bfe8f5" stroke="#1c6f93" stroke-width="1.500"/><path d="M8.500 6 V19 M19 4 V13" stroke="#999" stroke-width="1.300"/><path d="M9 16 Q14 10.500 20 16 Q14 21.500 9 16 Z" fill="#fff" stroke="#555" stroke-width="1.500"/><circle cx="14.500" cy="16" r="2.200" fill="#444"/>`,
  globe: svg`<circle cx="10" cy="10.500" r="8.500" fill="url(#gGlobe)"/><path d="M4 6 Q8 3 10 6 Q8 9 6 9 Z M11 9 Q16 7 16 12 Q13 16 11 14 Z" fill="#a8dcf2"/><path d="M3 12 Q-1 18 3 18.500 Q9 17 15 10 Q21 2 18 1 Q16 0 13 2.500" fill="none" stroke="#666" stroke-width="1.500"/>`,
  square: svg`<rect x="1" y="1" width="18.500" height="18.500" fill="url(#gPane)" stroke="#2d7fa3" stroke-width="1.400"/>`,
  binoc: svg`<path d="M4 1 H8 V5 H11.500 V1 H15.500 V5 L20 13 V19 H12 V13 H8 V19 H0 V13 L4 5 Z" fill="url(#gBinoc)"/><path d="M4 1 H8 V4 H4 Z M11.500 1 H15.500 V4 H11.500 Z" fill="#666"/><path d="M0 15.500 H8 V19.500 H0 Z M12 15.500 H20 V19.500 H12 Z" fill="#222"/>`,
  geomFilter: svg`<path d="M1 7 L7 1 H23 V17 L17 23 H1 Z" fill="#fff" stroke="#555" stroke-width="1.600"/><path d="M1 7 H17 V23 M17 7 L23 1" fill="none" stroke="#555" stroke-width="1.600"/><path d="M4.500 12 L6.500 10 H8 V17 H13 V18.500 L11.500 20.500 H4.500 Z" fill="#fdeccb" stroke="#d39f44" stroke-width="1.300"/><path d="M8 10.500 L10 8.500 H15.500 V14 L13.500 16 H8 Z" fill="#7fd0ef" stroke="#3f97bb"/>`,

  up: svg`<path d="M4 12 L10.500 5 L17 12 H12.500 L10.500 10.500 L8.500 12 Z" fill="#fff"/>`,
  search: svg`<circle cx="11.500" cy="8" r="4.200" fill="none" stroke="#f2f2f2" stroke-width="2.200"/><path d="M8.500 11.500 L5 15.500" stroke="#f2f2f2" stroke-width="2.800"/>`,
  learn: svg`<path d="M10 4 L18 7.500 L10 11 L2 7.500 Z" fill="#f2f2f2"/><path d="M5 10.500 L10 12.500 L15 10.500 V14 L10 16 L5 14 Z" fill="#f2f2f2"/><path d="M3 8 V15" stroke="#f2f2f2" stroke-width="1.400"/>`,
  min: svg`<path d="M4 13 H16" stroke="#777" stroke-width="2.500"/>`,
  restore: svg`<path d="M8 8 V5 H17 V11 H14" fill="none" stroke="#777" stroke-width="1.500"/><path d="M8 5 H17" stroke="#777" stroke-width="2.500"/><rect x="4" y="9" width="9" height="6" fill="none" stroke="#777" stroke-width="1.500"/><path d="M4 9.500 H13" stroke="#777" stroke-width="2.500"/>`,
  x: svg`<path d="M5 5 L15 15 M15 5 L5 15" stroke="#777" stroke-width="2.400"/>`,
};

const icon = (name: string, size = 20, box = size) =>
  html`<svg class="ico" width=${size} height=${size} viewBox="0 0 ${box} ${box}" aria-hidden="true">${icons[name]}</svg>`;

const defs = svg`<defs>
  <linearGradient id="gCyan" x2="1" y2="1"><stop offset="0" stop-color="#c0f0fc"/><stop offset="1" stop-color="#8fdff8"/></linearGradient>
  <linearGradient id="gIce" x2="1" y2="1"><stop offset="0" stop-color="#f2fcff"/><stop offset="1" stop-color="#b5e9f8"/></linearGradient>
  <linearGradient id="gPaper" x2="1" y2="1"><stop offset="0" stop-color="#fff"/><stop offset="1" stop-color="#dfe4e7"/></linearGradient>
  <linearGradient id="gTan" x2="1"><stop offset="0" stop-color="#f6e0b8"/><stop offset="1" stop-color="#c9a266"/></linearGradient>
  <linearGradient id="gRepaint" x2="1" y2="1"><stop offset="0" stop-color="#d6eef6"/><stop offset=".5" stop-color="#9fd3e6"/><stop offset="1" stop-color="#3f9dc3"/></linearGradient>
  <linearGradient id="gMetal" x2="1" y2="1"><stop offset="0" stop-color="#fff"/><stop offset=".5" stop-color="#bbb"/><stop offset="1" stop-color="#777"/></linearGradient>
  <linearGradient id="gGrayH" x2="1"><stop offset="0" stop-color="#b5b5b5"/><stop offset="1" stop-color="#e9e9e9"/></linearGradient>
  <linearGradient id="gFunnel" x2="1"><stop offset="0" stop-color="#fff"/><stop offset="1" stop-color="#b5b5b5"/></linearGradient>
  <linearGradient id="gPane" x2="1" y2="1"><stop offset="0" stop-color="#fff"/><stop offset="1" stop-color="#c3d8e2"/></linearGradient>
  <linearGradient id="gBinoc" x2="1"><stop offset="0" stop-color="#333"/><stop offset=".3" stop-color="#999"/><stop offset=".5" stop-color="#333"/><stop offset=".7" stop-color="#999"/><stop offset="1" stop-color="#222"/></linearGradient>
  <radialGradient id="gViolet" cx=".35" cy=".3"><stop offset="0" stop-color="#fff"/><stop offset="1" stop-color="#bfc1ee"/></radialGradient>
  <radialGradient id="gBall" cx=".48" cy=".25" r=".7"><stop offset="0" stop-color="#f4f4f4"/><stop offset=".3" stop-color="#b9b9b9"/><stop offset="1" stop-color="#4a4a4a"/></radialGradient>
  <radialGradient id="gBall2" cx=".35" cy=".3" r=".8"><stop offset="0" stop-color="#fff"/><stop offset="1" stop-color="#8d8d8d"/></radialGradient>
  <radialGradient id="gGlobe" cx=".4" cy=".3" r=".8"><stop offset="0" stop-color="#8fd4f0"/><stop offset="1" stop-color="#1f7fb0"/></radialGradient>
</defs>`;

/* ---------- 3D part ---------- */

const bolt = (x: number, y: number, rx: number, ry: number, dx = 20, dy = -12) => svg`
  <g>
    <ellipse cx=${x + dx} cy=${y + dy} rx=${rx - 3} ry=${ry - 3} fill="url(#mBoltSide)"/>
    <ellipse cx=${x + dx / 2} cy=${y + dy / 2} rx=${rx - 1} ry=${ry - 1} fill="url(#mBoltSide)"/>
    <ellipse cx=${x} cy=${y} rx=${rx} ry=${ry} fill="#636466" stroke="#57585a" stroke-width="2.500"/>
    <path d="M${x + rx * 0.2} ${y - ry * 0.97} Q${x + rx * 0.8} ${y - ry * 0.75} ${x + rx} ${y - ry * 0.1}" fill="none" stroke="#cfd1d3" stroke-width="3"/>
    <path d="M${x - rx * 0.55} ${y - ry * 0.3} L${x + rx * 0.05} ${y - ry * 0.5} L${x + rx * 0.5} ${y - ry * 0.1} L${x + rx * 0.35} ${y + ry * 0.4} L${x - rx * 0.15} ${y + ry * 0.65} L${x - rx * 0.55} ${y + ry * 0.3} Z" fill="#5f6062"/>
    <path d="M${x - rx * 0.55} ${y + ry * 0.35} L${x} ${y + ry * 0.1} L${x + rx * 0.35} ${y + ry * 0.4} L${x - rx * 0.15} ${y + ry * 0.68} Z" fill="#7d7e80"/>
  </g>`;

const model = svg`
  <defs>
    <linearGradient id="mTop" x1="0" y1="0" x2="1" y2=".6"><stop offset="0" stop-color="#aebec8"/><stop offset=".5" stop-color="#97a6b1"/><stop offset="1" stop-color="#9aabb6"/></linearGradient>
    <linearGradient id="mSide" gradientUnits="userSpaceOnUse" x1="930" y1="240" x2="1060" y2="420"><stop offset="0" stop-color="#8b98a2"/><stop offset=".4" stop-color="#a9bac4"/><stop offset=".75" stop-color="#87929a"/><stop offset="1" stop-color="#858f97"/></linearGradient>
    <linearGradient id="mBoltSide" x2="1" y2="1"><stop offset="0" stop-color="#8a8b8d"/><stop offset=".5" stop-color="#626365"/><stop offset="1" stop-color="#4c4d4f"/></linearGradient>
    <linearGradient id="mBoss" x2="0" y2="1"><stop offset="0" stop-color="#8795a0"/><stop offset=".3" stop-color="#a3b3bd"/><stop offset=".7" stop-color="#7d8994"/><stop offset="1" stop-color="#48505a"/></linearGradient>
    <linearGradient id="mRim" x1=".3" y1="0" x2=".8" y2="1"><stop offset="0" stop-color="#8e9da8"/><stop offset=".4" stop-color="#94a4af"/><stop offset=".75" stop-color="#76828c"/><stop offset="1" stop-color="#4b525b"/></linearGradient>
    <linearGradient id="mFlank" x2="0" y2="1"><stop offset="0" stop-color="#9babb6"/><stop offset=".3" stop-color="#84919b"/><stop offset=".8" stop-color="#76818a"/><stop offset="1" stop-color="#59626b"/></linearGradient>
    <radialGradient id="mDome" gradientUnits="userSpaceOnUse" cx="640" cy="500" r="640"><stop offset="0" stop-color="#bccbd5"/><stop offset=".25" stop-color="#aebec9"/><stop offset=".6" stop-color="#8e9ca6"/><stop offset="1" stop-color="#77838d"/></radialGradient>
    <linearGradient id="mDomeTop" gradientUnits="userSpaceOnUse" x1="400" y1="330" x2="470" y2="520"><stop offset="0" stop-color="#83919b"/><stop offset=".5" stop-color="#93a2ad" stop-opacity=".6"/><stop offset="1" stop-color="#a5b5c0" stop-opacity="0"/></linearGradient>
    <linearGradient id="mShadeL" gradientUnits="userSpaceOnUse" x1="140" y1="600" x2="480" y2="500"><stop offset="0" stop-color="#5f6a74"/><stop offset=".5" stop-color="#84939e" stop-opacity=".6"/><stop offset="1" stop-color="#a5b5c0" stop-opacity="0"/></linearGradient>
    <linearGradient id="mHole" x1="0" y1="0" x2=".8" y2="1"><stop offset="0" stop-color="#4a525c"/><stop offset=".45" stop-color="#84919b"/><stop offset=".8" stop-color="#a9bac4"/><stop offset="1" stop-color="#7b8791"/></linearGradient>
    <linearGradient id="mPocket" x1="0" y1="0" x2="1" y2=".7"><stop offset="0" stop-color="#55606a"/><stop offset=".5" stop-color="#7f8d97"/><stop offset="1" stop-color="#a9bac4"/></linearGradient>
    <linearGradient id="mEdge" gradientUnits="userSpaceOnUse" x1="400" y1="600" x2="250" y2="1020"><stop offset="0" stop-color="#aabbc5"/><stop offset=".6" stop-color="#8796a1"/><stop offset="1" stop-color="#707c86"/></linearGradient>
    <linearGradient id="mBase" gradientUnits="userSpaceOnUse" x1="250" y1="1150" x2="740" y2="1250"><stop offset="0" stop-color="#454a52"/><stop offset=".6" stop-color="#4a4f58"/><stop offset="1" stop-color="#5a616b"/></linearGradient>
    <filter id="mSoft"><feGaussianBlur stdDeviation="7"/></filter>
    <filter id="mSoftWide"><feGaussianBlur stdDeviation="30"/></filter>
    <clipPath id="mDomeClip"><path d="M125 640 Q140 500 190 450 Q320 345 480 338 Q650 340 790 484 L856 560 L862 900 L850 1190 L790 1215 L670 1292 Q610 1330 545 1330 Q480 1328 430 1304 Q400 1290 380 1270 L260 1180 L190 1080 L165 940 Z"/></clipPath>
  </defs>

  <path d="M275 390 L284 262 Q290 240 320 228 L390 188 L610 68 Q645 52 680 62 L900 203 L1000 214 Q1038 226 1043 262 L1085 575 L1085 640 L1070 890 Q1066 915 1040 928 L1000 950 L960 955 L700 700 Z" fill="url(#mTop)"/>
  <path d="M900 203 L1000 214 Q1038 226 1043 262 L1085 575 L1040 590 L985 575 L955 310 L945 285 Z" fill="url(#mSide)"/>
  <path d="M275 392 L284 265 L600 98 Q640 82 670 100 L925 270 Q958 292 962 330 L985 570 L960 590 L600 600 L250 600 Z" fill="#858f97"/>
  <path d="M290 250 L600 95 Q640 80 670 98 L930 272 Q956 292 960 330 L985 560 Q990 578 1010 576" fill="none" stroke="#b0c0ca" stroke-width="7"/>
  <path d="M900 203 L965 245" stroke="#7d8993" stroke-width="2"/>
  <path d="M275 400 L283 270" stroke="#76828b" stroke-width="4"/>
  <path d="M965 590 L972 573 L1000 580 Q1020 562 1036 570 L1040 600 Z" fill="#5d6872"/>

  <path d="M1064 800 Q1104 805 1106 836 Q1102 862 1070 872 Z" fill="url(#mBoltSide)"/>
  <path d="M945 790 L1072 805 L1068 895 Q1064 915 1040 928 L1000 950 L975 955 L940 900 Z" fill="#8a969f"/>
  <path d="M1040 815 L1036 900 Q1030 930 1000 948 L1045 925 Q1064 912 1068 895 L1072 812 Z" fill="#64707a"/>
  <path d="M1035 812 L1030 900 Q1024 925 990 945" fill="none" stroke="#a6b7c1" stroke-width="7"/>
  ${bolt(960, 908, 42, 50, 16, -6)}

  <path d="M150 545 Q66 530 64 650 Q66 745 112 756 L170 740 V550 Z" fill="url(#mBoss)"/>
  <path d="M92 562 Q72 590 70 650 Q72 710 90 740" fill="none" stroke="#6e7a84" stroke-width="5"/>
  ${bolt(165, 540, 26, 38, 4, -6)}
  <path d="M190 455 Q150 480 145 515 L200 505 Z" fill="#8e9ca6"/>

  <path d="M420 305 Q600 230 760 300 Q900 380 950 505 Q962 550 968 590" fill="none" stroke="#b0c0ca" stroke-width="8"/>
  <path d="M125 640 Q135 500 190 455 Q300 335 480 292 Q610 255 740 312 Q880 385 945 510 L953 800 L935 1105 Q930 1135 900 1150 L790 1222 L670 1292 Q610 1330 545 1330 Q480 1328 430 1304 Q400 1290 380 1270 L260 1180 L190 1080 L165 940 Z" fill="url(#mRim)"/>
  <path d="M855 555 Q900 560 948 520 L952 800 L936 1105 L850 1180 Z" fill="url(#mFlank)"/>
  <path d="M888 545 Q925 530 948 515 L952 800 L936 1105 Q930 1135 885 1158 L899 850 Z" fill="#77838d" fill-opacity=".75"/>
  <g clip-path="url(#mDomeClip)">
    <path d="M100 320 H900 V1360 H100 Z" fill="url(#mDome)"/>
    <path d="M100 320 H700 V560 H100 Z" fill="url(#mDomeTop)"/>
    <path d="M100 320 H560 V1000 H100 Z" fill="url(#mShadeL)"/>
    <path d="M545 850 Q640 970 840 1100 L700 1130 L400 1020 L480 900 Z" fill="#5d6770" fill-opacity=".8" filter="url(#mSoftWide)"/>
    <path d="M150 900 L350 1010 L460 1000 L725 1108 L690 1150 L760 1240 L640 1340 H400 L100 1150 Z" fill="url(#mBase)" filter="url(#mSoft)"/>
  </g>
  <path d="M400 325 Q540 290 680 362 Q820 440 886 532 L899 850 L884 1165" fill="none" stroke="#74818b" stroke-width="2"/>
  <path d="M790 488 L856 560 L862 900 L850 1185 L790 1213" fill="none" stroke="#9fb0ba" stroke-width="5"/>

  <path d="M940 590 L1070 600 Q1118 618 1118 705 Q1114 800 1070 812 L940 808 Q908 790 908 700 Q910 612 940 590 Z" fill="url(#mBoss)"/>
  <path d="M945 592 Q915 630 914 705 Q916 780 945 806" fill="none" stroke="#a3b4be" stroke-width="6"/>
  <path d="M1066 603 Q1032 630 1030 706 Q1034 790 1066 808" fill="none" stroke="#a9bac4" stroke-width="12"/>
  <ellipse cx="1080" cy="707" rx="36" ry="98" fill="#89949c"/>
  <ellipse cx="1083" cy="708" rx="18" ry="42" fill="url(#mHole)"/>
  <path d="M1076 668 Q1064 708 1076 748" fill="none" stroke="#56606a" stroke-width="5"/>

  <path d="M792 492 Q640 575 624 650 Q622 692 690 686 L852 636 L850 560 Z" fill="url(#mPocket)"/>
  <path d="M788 496 Q690 555 650 600 Q710 560 770 530 Z" fill="#4b545e"/>
  <path d="M792 490 L852 560 L852 630 L820 632 L830 560 Z" fill="#8e9ca6"/>
  <path d="M624 655 Q630 692 695 686 L852 636 M806 636 Q830 632 852 628" fill="none" stroke="#acbdc7" stroke-width="5"/>
  <path d="M792 490 L850 556 V632" fill="none" stroke="#acbdc7" stroke-width="5"/>
  ${bolt(775, 582, 43, 48, 14, -8)}

  <path d="M684 1152 Q706 1108 850 1106 L848 1185 L792 1213 Q700 1200 684 1152 Z" fill="url(#mPocket)"/>
  <path d="M700 1122 Q760 1098 850 1108" fill="none" stroke="#3f464f" stroke-width="7"/>
  <path d="M690 1168 Q720 1205 792 1213 L848 1185" fill="none" stroke="#a0b0ba" stroke-width="5"/>
  ${bolt(770, 1152, 43, 46, 16, -6)}

  <path d="M200 1080 Q260 1110 275 1165 L262 1176 L190 1110 Z" fill="#8795a0"/>
  ${bolt(230, 1122, 37, 42, 3, 2)}
  <path d="M196 1070 Q262 1110 276 1160 L320 1180 L300 1040 Z" fill="#454a52"/>

  <ellipse cx="330" cy="797" rx="219" ry="231" fill="url(#mEdge)"/>
  <path d="M340 570 Q480 590 528 720" fill="none" stroke="#b9c9d3" stroke-width="8" filter="url(#mSoft)"/>
  <ellipse cx="324" cy="799" rx="207" ry="221" fill="#848e96"/>
  <ellipse cx="325" cy="800" rx="70" ry="75" fill="#a9b9c3"/>
  <ellipse cx="328" cy="797" rx="66" ry="71" fill="url(#mHole)"/>

  ${bolt(308, 308, 46, 53, 26, -6)}
  ${bolt(874, 343, 45, 51, 26, -8)}

  <g fill="none" stroke="#5b6065" stroke-width="2.500">
    <ellipse cx="716" cy="82" rx="24" ry="27" fill="#74787c"/>
    <ellipse cx="708" cy="88" rx="26" ry="27" stroke="#8f969b" fill="#9aa9b3"/>
    <ellipse cx="618" cy="148" rx="38" ry="48" fill="#55585b"/>
    <ellipse cx="592" cy="155" rx="50" ry="57" fill="#5c5f62"/>
    <ellipse cx="588" cy="155" rx="40" ry="48" stroke="#77797c"/>
    <path d="M560 130 L590 112 L625 130 L628 170 L598 192 L565 178 Z M590 112 V135 L570 150 L565 178 M625 130 L608 145 L590 135 M608 145 L612 172" stroke="#8f9194"/>
    <path d="M570 180 L590 165 L620 178 L595 194 Z" fill="#88898b"/>
    <path d="M610 98 L685 56 M650 160 L735 105"/>
    <path d="M636 132 L655 124 L690 126 M650 128 V160 M640 138 L632 130" stroke="#f4f4f4" stroke-width="3"/>
    <path d="M600 102 Q630 112 640 140" stroke="#e9e9e9" stroke-width="2"/>
  </g>

  <path d="M558 735 L561 804" stroke="#35f435" stroke-width="3.500"/><rect x="551" y="726" width="13" height="13" fill="#25ff25"/>
  <path d="M561 804 L625 807" stroke="#f03a3a" stroke-width="3.500"/><rect x="620" y="800" width="16" height="16" fill="#ff2f2f"/>
  <path d="M561 804 L535 820" stroke="#30f0f0" stroke-width="3.500"/><rect x="522" y="813" width="18" height="18" fill="#25ffff"/>`;

/* ---------- data ---------- */

const tabs = ["Analysis", "Live Simulation", "Annotate", "Manikin", "Tools", "View", "Framework", "Applications"];

interface TreeRow { depth: number; icon: string; label: string; arrow?: "open" | "closed"; dim?: boolean; }
const row = (depth: number, iconName: string, label: string, arrow?: "open" | "closed", dim = false): TreeRow => ({ depth, icon: iconName, label, arrow, dim });

const upperRows: TreeRow[] = [
  row(0, "asm", "REPEAT.ASM"),
  row(1, "planeDim", "ASM_RIGHT", undefined, true),
  row(1, "planeDim", "ASM_TOP", undefined, true),
  row(1, "planeDim", "ASM_FRONT", undefined, true),
  row(1, "csysDim", "ASM_DEF_CSYS", undefined, true),
  row(1, "part", "GEARBOX_REAR_REPEAT.PRT", "closed"),
  row(1, "part", "GEARBOX_FRONT_REPEAT.PRT", "closed"),
  row(1, "part", "BOLT_6-25.PRT", "open"),
  row(2, "asmOutline", "Placement", "open"),
  row(3, "asmOutline", "Set25", "open"),
  row(4, "coincident", "Coincident"),
  row(4, "coincident", "Coincident"),
  row(2, "design", "Design Items", "closed"),
  row(2, "planeDim", "RIGHT", undefined, true),
  row(2, "planeDim", "TOP", undefined, true),
  row(2, "planeDim", "FRONT", undefined, true),
  row(2, "csysDim", "PRT_CSYS_DEF", undefined, true),
  row(2, "feature", "Protrusion id 39", "closed"),
  row(2, "feature", "Protrusion id 59", "closed"),
  row(2, "feature", "Cut id 85", "closed"),
  row(2, "round", "Round id 134"),
  row(2, "chamfer", "Chamfer id 155"),
];
const lowerRows: TreeRow[] = ["6-25", "5-18", "5-18", "5-18", "5-18", "6-25", "6-25"].map((n) => row(1, "part", `BOLT_${n}.PRT`, "closed"));

const viewTools: [string, string, boolean?][] = [
  ["refit", "Refit"], ["zoomIn", "Zoom In"], ["zoomOut", "Zoom Out"], ["repaint", "Repaint"], ["shading", "Rendering Options"],
  ["saved", "Display Style"], ["viewMgr", "Saved Orientations"], ["captures", "View Manager"], ["persp", "Perspective View"],
  ["sectionOff", "Section Display"], ["datumDisplay", "Datum Display Filters"], ["annotation", "Annotation Display", true],
  ["spin", "Spin Center", true], ["simDim", "Simulate"], ["pauseDim", "Pause"], ["resultDim", "Results"],
];

const caret = html`<span class="caret"></span>`;

@customElement("app-root")
export class AppRoot extends LitElement {
  static styles = css`
    :host { display: block; font-family: "Noto Sans", "Open Sans", sans-serif; font-size: 14px; line-height: 20px; color: #4d4d4d; }
    * { box-sizing: border-box; }
    button, select, input { font: inherit; color: inherit; margin: 0; padding: 0; border: 0; background: none; border-radius: 0; }
    button { display: flex; align-items: center; justify-content: center; }
    .ico { display: block; flex: none; overflow: visible; }
    .caret { flex: none; width: 0; height: 0; border: 5px solid transparent; border-top: 6px solid #666; border-bottom: 0; }
    .dimmed { color: #a9a9a9; }
    .dim .caret { border-top-color: #a9a9a9; }
    .defs { position: absolute; width: 0; height: 0; }

    .app { display: flex; flex-direction: column; min-height: 100vh; background: #fff; border-top: 4px solid #000; }

    .titlebar { display: grid; grid-template-columns: 1fr auto 1fr; align-items: center; height: 34px; background: #fafafa; }
    .quick { display: flex; align-items: center; height: 100%; padding-left: 9px; }
    .brand { display: flex; align-items: center; gap: 5px; width: 93px; font: 600 22px/28px "Open Sans", sans-serif; color: #58595b; }
    .brand span { margin-top: -4px; }
    .brand sup { font-size: 9px; line-height: 20px; margin-left: -4px; align-self: flex-start; }
    .quick button { height: 28px; }
    .q { width: 30px; }
    .q-split { width: 47px; gap: 8px; justify-content: flex-start; padding-left: 4px; }
    .qsep { width: 1px; height: 30px; background: #bdbdbd; margin: 0 5px 0 0; }
    .apptitle { margin: 0; font-size: 16px; font-weight: 400; }
    .winbtns { display: flex; justify-content: flex-end; gap: 13px; padding-right: 10px; }

    .tabs { display: flex; height: 35px; background: #3e4648; color: #f2f2f2; font-size: 16px; }
    .tabs .tab { padding: 0 28px; margin-right: 1px; }
    .tabs .file { width: 75px; background: linear-gradient(160deg, #68cf46, #4fa436); color: #fff; }
    .tabs .model { width: 105px; background: #fff; color: #41822a; }
    .tabs .right { display: flex; align-items: center; gap: 10px; margin-left: auto; padding-right: 4px; }
    .tabs .right button { gap: 7px; }
    .tabs .right .caret { border-top-color: #fff; }
    .tabs .help { font-weight: 700; width: 20px; }

    .ribbon { display: flex; padding: 3px 0 2px; border-bottom: 1px solid #aeb9bb; }
    .group { display: flex; flex-direction: column; width: var(--w); height: 130px; border-right: 1px solid #b5bcbe; }
    .body { display: flex; height: 108px; }
    .gname { align-self: center; gap: 4px; height: 20px; white-space: nowrap; }
    .big { display: flex; flex-direction: column; align-items: center; justify-content: flex-start; width: var(--w); padding-top: 4px; flex: none; }
    .big .txt { display: flex; flex-direction: column; align-items: center; margin-top: 12px; white-space: nowrap; }
    .big .txt span { display: flex; align-items: center; gap: 4px; }
    .big .txt .caret { margin-top: 6px; }
    .big .txt span .caret { margin-top: 0; }
    .col { display: flex; flex-direction: column; padding-top: 2px; flex: none; }
    .sm { justify-content: flex-start; height: 26px; margin-bottom: 8px; gap: 5px; white-space: nowrap; }
    .sm .caret { margin-left: 3px; }
    .isep { width: 1px; height: 100px; background: #cdd2d3; }
    .w90 { --w: 90px; } .w92 { --w: 92px; } .w80 { --w: 80px; } .w100 { --w: 100px; } .w57 { --w: 57px; } .w60 { --w: 60px; }
    .w88 { --w: 88px; } .w70 { --w: 70px; } .w56 { --w: 56px; } .w94 { --w: 94px; } .w76 { --w: 76px; } .w68 { --w: 68px; }
    .g1 { --w: 140px; } .g2 { --w: 85px; } .g3 { --w: 229px; } .g4 { --w: 270px; } .g5 { --w: 117px; } .g6 { --w: 89px; }
    .g7 { --w: 503px; } .g8 { --w: 252px; } .g9 { --w: 154px; }
    .center { align-items: center; width: 100%; }
    .inset { padding-left: 19px; }

    .main { flex: 1; display: flex; }
    .side { width: 434px; flex: none; background: #fff; }
    .sidetabs { display: flex; align-items: center; height: 32px; background: #e8ecec; }
    .sidetabs button { width: 38px; height: 32px; }
    .sidetabs .on { width: 39px; background: #fff; }
    .treebar { display: flex; align-items: center; height: 40px; padding: 0 6px 0 13px; }
    .treebar button { width: 30px; height: 30px; flex: none; }
    .treebar .lead { width: 21px; }
    .grip { width: 4px; height: 18px; margin: 0 17px 0 6px; flex: none; background: repeating-linear-gradient(#bbb 0 3px, transparent 3px 5px); border-right: 1px solid #fff; }
    .on-sq { background: #dcdddf; outline: 1px solid #adb0b1; outline-offset: -1px; }
    .tsep { width: 1px; height: 30px; background: #c3c7c8; margin: 0 5px; }
    .push, .treebar .push { margin-left: auto; }
    .find { display: flex; align-items: center; padding-left: 14px; height: 34px; }
    .box { display: flex; align-items: center; width: 338px; height: 34px; margin-left: 4px; border: 1px solid #a9b9b7; }
    .box input { flex: 1; min-width: 0; height: 30px; padding: 0 8px; outline: none; }
    .find .open { width: 22px; height: 30px; } .find .add { width: 30px; height: 30px; }
    .tree { list-style: none; margin: 0; padding: 6px 6px 24px 13px; font-size: 12px; line-height: 20px; }
    .tree li { display: flex; align-items: center; height: 22px; padding-left: calc(var(--d) * 25px); }
    .tree .lbl { margin-left: 6px; padding-top: 2px; }
    .tree .faded { color: #bdb39c; }
    .tw { width: 25px; height: 22px; margin-left: -25px; padding-right: 3px; }
    .right-tri { width: 0; height: 0; border: 5px solid transparent; border-left: 9px solid #858585; border-right: 0; }
    .down-tri { width: 0; height: 0; border: 5px solid transparent; border-top: 9px solid #858585; border-bottom: 0; }
    .tree .bar { height: 18px; }
    .bar i { flex: 1; height: 8px; border: 2px solid currentColor; border-width: 0 2px; display: flex; align-items: center; }
    .bar i::before { content: ""; flex: 1; height: 2px; background: currentColor; }
    .blue { color: #5fa6c4; } .green { color: #5ac43c; }
    .d0 { --d: 0; } .d1 { --d: 1; } .d2 { --d: 2; } .d3 { --d: 3; } .d4 { --d: 4; }

    .view { position: relative; flex: 1; background: #e8eaee; overflow: hidden; }
    .viewbar { position: absolute; top: 7px; left: calc(50% - 258px); display: flex; gap: 2px; padding: 3px; height: 38px; align-items: center; background: #fff; border: 1px solid #a9bab9; }
    .viewbar button { width: 30px; height: 29px; }
    .part3d { position: absolute; top: 141px; left: calc(50% - 177px); width: 400px; height: 460px; }
    .pointer { position: absolute; top: 117px; left: calc(50% - 117px); }

    .status { display: flex; height: 43px; padding-left: 7px; border-top: 1px solid #aeb9bb; background: #fff; }
    .status .l { display: flex; gap: 4px; padding-top: 11px; }
    .status .l button { width: 26px; height: 30px; }
    .ssep { width: 1px; height: 32px; background: #c9c9c9; margin-left: 6px; }
    .status .r { display: flex; margin-left: auto; padding: 6px 22px 0 0; align-items: flex-start; }
    .vs { width: 1px; height: 37px; margin: -2px 0 0; background: #c9c9c9; }
    .second { margin-left: 4px; }
    .split { display: flex; margin: 0 3px 0 2px; border: 1px solid #c3c3c3; background: #fafafa; }
    .split button { height: 28px; width: 32px; } .split .drop { width: 17px; border-left: 1px solid #c3c3c3; }
    .filterbtn { width: 49px; height: 35px; margin: 0 118px 0 2px; border: 1px solid #adadad; background: #f7f7f7; }
    .selwrap { position: relative; width: 217px; height: 28px; margin-top: 3px; border: 1px solid #adadad; background: #f7f7f7; }
    .selwrap select { appearance: none; width: 100%; height: 26px; padding: 0 26px 0 8px; outline: none; }
    .selarrow { position: absolute; top: 0; right: 0; width: 19px; height: 26px; border-left: 1px solid #adadad; display: flex; align-items: center; justify-content: center; pointer-events: none; }
  `;

  private big(name: string, w: string, l1: string, l2 = "", drop: "" | "below" | "inline" = "") {
    return html`<button class="big ${w}">${icon(name, 40)}
      <span class="txt"><span>${l1}</span>${l2 ? html`<span>${l2}${drop === "inline" ? caret : nothing}</span>` : nothing}${drop === "below" ? caret : nothing}</span>
    </button>`;
  }

  private small(name: string, label: string, text = true, drop = false, dim = false) {
    return html`<button class=${classMap({ sm: true, dim })} aria-label=${label}>${icon(name)}${text ? html`<span class=${dim ? "dimmed" : ""}>${label}</span>` : nothing}${drop ? caret : nothing}</button>`;
  }

  private group(cls: string, name: string, body: unknown) {
    return html`<section class="group ${cls}" aria-label=${name}><div class="body">${body}</div><button class="gname">${name}${caret}</button></section>`;
  }

  private treeRow(r: TreeRow) {
    return html`<li class="d${r.depth}">
      ${r.arrow ? html`<button class="tw" aria-label=${r.arrow === "open" ? "Collapse" : "Expand"}><span class=${r.arrow === "open" ? "down-tri" : "right-tri"}></span></button>` : nothing}
      ${icon(r.icon)}<span class=${classMap({ lbl: true, faded: !!r.dim })}>${r.label}</span></li>`;
  }

  render() {
    return html`
      <svg class="defs" aria-hidden="true">${defs}</svg>
      <div class="app">
        <header class="titlebar">
          <div class="quick">
            <div class="brand">${icon("asm")}<span>creo</span><sup>•</sup></div>
            <button class="q" aria-label="New">${icon("newDoc")}</button>
            <button class="q" aria-label="Open">${icon("open")}</button>
            <button class="q" aria-label="Save">${icon("save")}</button>
            <button class="q-split" aria-label="Undo">${icon("undo")}${caret}</button>
            <button class="q-split dim" aria-label="Redo">${icon("redo")}${caret}</button>
            <button class="q" aria-label="Regenerate">${icon("regenSmall")}</button>
            <button class="q-split" aria-label="Windows">${icon("windows")}${caret}</button>
            <button class="q" aria-label="Close window">${icon("closeWin")}</button>
            <span class="qsep"></span>
            <button aria-label="Customize toolbar">${icon("custom")}</button>
          </div>
          <h1 class="apptitle">REPEAT (Active) - Creo Parametric</h1>
          <div class="winbtns">
            <button aria-label="Minimize">${icon("min")}</button>
            <button aria-label="Restore">${icon("restore")}</button>
            <button aria-label="Close">${icon("x")}</button>
          </div>
        </header>

        <nav class="tabs" aria-label="Ribbon tabs">
          <button class="file">File</button>
          <button class="model">Model</button>
          ${tabs.map((t) => html`<button class="tab">${t}</button>`)}
          <div class="right">
            <button aria-label="Minimize ribbon">${icon("up")}</button>
            <button aria-label="Command search">${icon("search")}</button>
            <button aria-label="Learning">${icon("learn")}${caret}</button>
            <button class="help" aria-label="Help">?</button>
          </div>
        </nav>

        <div class="ribbon">
          ${this.group("g1", "Operations", html`
            ${this.big("regenerate", "w92", "Regenerate", "", "below")}
            <div class="col">${this.small("copyDim", "Copy", false)}${this.small("pasteDim", "Paste", false, true, true)}${this.small("deleteDim", "Delete", false, true, true)}</div>`)}
          ${this.group("g2", "Get Data", html`
            <div class="col center">${this.small("shapes", "User-Defined Feature", false)}${this.small("copyGeom", "Copy Geometry", false)}${this.small("shrink", "Shrinkwrap", false)}</div>`)}
          ${this.group("g3", "Component", html`
            ${this.big("assemble", "w80", "Assemble", "", "below")}
            <div class="col">${this.small("createComp", "Create", false, true)}${this.small("repeatDim", "Repeat", false)}${this.small("mirror", "Mirror Component", false)}</div>
            <span class="isep push"></span>
            ${this.big("drag", "w100", "Drag", "Components")}`)}
          ${this.group("g4", "Datum", html`
            ${this.big("plane", "w57", "Plane")}
            <div class="col">${this.small("axis", "Axis")}${this.small("point", "Point", true, true)}${this.small("csys", "Coordinate System")}</div>
            <span class="push"></span>
            ${this.big("sketch", "w60", "Sketch")}`)}
          ${this.group("g5", "Cut & Surface", html`
            <div class="col inset">${this.small("hole", "Hole")}${this.small("extrude", "Extrude")}${this.small("revolve", "Revolve")}</div>`)}
          ${this.group("g6", "Modifiers", html`${this.big("pattern", "w88", "Pattern", "", "below")}`)}
          ${this.group("g7", "Model Display", html`
            ${this.big("manageViews", "w70", "Manage", "Views", "inline")}
            ${this.big("section", "w56", "Section", "", "below")}
            ${this.big("appearances", "w100", "Appearances", "", "below")}
            <div class="col">${this.small("exploded", "Exploded View")}${this.small("toggleDim", "Toggle Status", true, false, true)}${this.small("editPos", "Edit Position")}</div>
            <span class="push"></span>
            ${this.big("display", "w56", "Display", "Style", "inline")}
            ${this.big("perspective", "w90", "Perspective", "View")}`)}
          ${this.group("g8", "Model Intent", html`
            ${this.big("compInterface", "w94", "Component", "Interface")}
            ${this.big("publish", "w68", "Publish", "Geometry")}
            ${this.big("family", "w60", "Family", "Table")}
            <div class="col">${this.small("braces", "Parameters", false)}${this.small("fx", "Switch Dimensions", false)}${this.small("dEq", "Relations", false)}</div>`)}
          ${this.group("g9", "Investigate", html`
            ${this.big("bom", "w76", "Bill of", "Materials")}
            ${this.big("refViewer", "w70", "Reference", "Viewer")}`)}
        </div>

        <main class="main">
          <aside class="side">
            <div class="sidetabs">
              <button class="on" aria-label="Model Tree">${icon("tree")}</button>
              <button aria-label="Folder Browser">${icon("folders")}</button>
              <button aria-label="Favorites">${icon("favorites")}</button>
            </div>
            <div class="treebar">
              <button class="lead" aria-label="Model">${icon("greenCube")}</button><span class="grip"></span>
              <button aria-label="Expand all">${icon("expandAll")}</button>
              <button aria-label="Collapse all">${icon("collapseAll")}</button>
              <button class="on-sq" aria-label="Show columns">${icon("columns")}</button>
              <span class="tsep"></span>
              <button aria-label="Tree filters">${icon("treeFilter")}</button>
              <button aria-label="Tree columns">${icon("treeColumns")}</button>
              <span class="tsep"></span>
              <button aria-label="Settings">${icon("gears")}</button>
              <button aria-label="Layer tree">${icon("layers")}</button>
              <button aria-label="Select in tree">${icon("treeSelect")}</button>
              <button class="push" aria-label="Tree report">${icon("report")}</button>
            </div>
            <div class="find">
              ${icon("funnel")}
              <div class="box"><input type="text" aria-label="Filter tree" /><button aria-label="Clear">${icon("clear")}</button></div>
              <button class="open" aria-label="Filter options">${caret}</button>
              <button class="add" aria-label="Add filter">${icon("plus")}</button>
            </div>
            <ul class="tree">
              ${upperRows.map((r) => this.treeRow(r))}
              <li class="bar d1 blue"><i></i></li>
              ${lowerRows.map((r) => this.treeRow(r))}
              <li class="bar d0 green"><i></i></li>
            </ul>
          </aside>

          <div class="view">
            <svg class="part3d" viewBox="0 0 1200 1380" role="img" aria-label="Gearbox assembly">${model}</svg>
            <div class="viewbar">
              ${viewTools.map(([i, label, on]) => html`<button class=${on ? "on-sq" : ""} aria-label=${label}>${icon(i)}</button>`)}
            </div>
            <svg class="pointer" width="12" height="20" viewBox="0 0 12 20" aria-hidden="true"><path d="M.5 .8 V16.500 L4.200 13 L6.800 18.500 L9.200 17.500 L6.800 12 H11.500 Z" fill="#fff" stroke="#222"/></svg>
          </div>
        </main>

        <footer class="status">
          <div class="l">
            <button class="on-sq" aria-label="Toggle navigator">${icon("navToggle")}</button>
            <button aria-label="Toggle browser">${icon("globe")}</button>
            <button aria-label="Full screen">${icon("square")}</button>
            <span class="ssep"></span>
          </div>
          <div class="r">
            <span class="vs"></span><span class="vs second"></span>
            <div class="split"><button aria-label="Find">${icon("binoc")}</button><button class="drop" aria-label="Find options">${caret}</button></div>
            <span class="vs"></span>
            <button class="filterbtn" aria-label="Geometry selection">${icon("geomFilter", 24)}</button>
            <div class="selwrap"><select aria-label="Selection filter"><option>Geometry</option></select><span class="selarrow">${caret}</span></div>
          </div>
        </footer>
      </div>`;
  }
}
